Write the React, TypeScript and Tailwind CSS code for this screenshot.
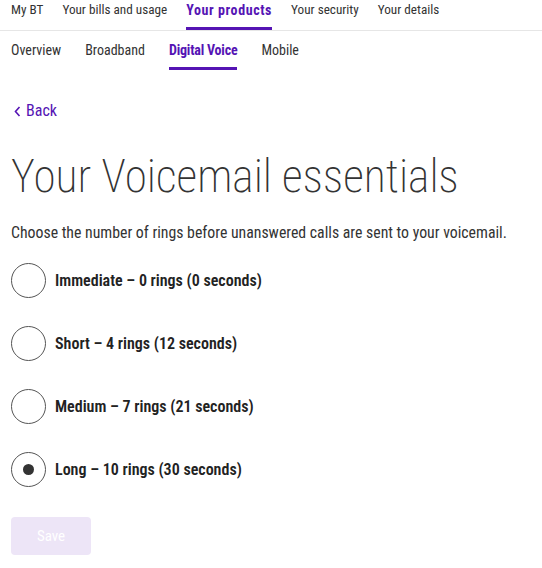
import { useState } from 'react';

const topNav = ['My BT', 'Your bills and usage', 'Your products', 'Your security', 'Your details'];
const subNav = ['Overview', 'Broadband', 'Digital Voice', 'Mobile'];

const options = [
  'Immediate – 0 rings (0 seconds)',
  'Short – 4 rings (12 seconds)',
  'Medium – 7 rings (21 seconds)',
  'Long – 10 rings (30 seconds)',
];

export default function App() {
  const [selected, setSelected] = useState(3);

  return (
    <div className="min-h-[568px] bg-white text-[#333] font-['Roboto_Condensed',sans-serif]">
      {/* main navigation */}
      <nav className="flex gap-[19px] border-b border-[#e6e6e6] px-[11px]">
        {topNav.map((item) => (
          <a
            key={item}
            className={
              item === 'Your products'
                ? 'border-b-[3px] border-[#5514b4] pb-[7px] text-[14px] tracking-[0.6px] leading-[20px] font-bold text-[#5514b4]'
                : 'border-b-[3px] border-transparent pb-[7px] text-[13.2px] leading-[20px] text-[#333]'
            }
          >
            {item}
          </a>
        ))}
      </nav>

      {/* product tabs */}
      <div className="flex gap-[24px] px-[11px] pt-[9px]">
        {subNav.map((item) => (
          <a
            key={item}
            className={
              item === 'Digital Voice'
                ? 'border-b-[3px] border-[#5514b4] pb-[7px] text-[14px] tracking-[-0.2px] leading-[20px] font-bold text-[#5514b4]'
                : 'border-b-[3px] border-transparent pb-[7px] text-[14px] leading-[20px] text-[#333]'
            }
          >
            {item}
          </a>
        ))}
      </div>

      <div className="px-[11px]">
        <a className="mt-[31px] flex items-center gap-[5px] pl-[3px] text-[16px] leading-[20px] text-[#5514b4]">
          <svg width="7" height="11" viewBox="0 0 7 11" fill="none">
            <path d="M5.5 1L1.5 5.5L5.5 10" stroke="#5514b4" strokeWidth="1.6" />
          </svg>
          Back
        </a>

        <h1 className="mt-[26px] text-[45.5px] leading-[60px] font-extralight text-[#333] whitespace-nowrap">
          Your Voicemail essentials
        </h1>

        <p className="mt-[16px] text-[15.8px] leading-[20px] whitespace-nowrap">
          Choose the number of rings before unanswered calls are sent to your voicemail.
        </p>

        <div className="mt-[20px] flex flex-col gap-[28px]">
          {options.map((label, i) => (
            <label key={label} className="flex items-center gap-[9px] cursor-pointer">
              <button
                type="button"
                onClick={() => setSelected(i)}
                className="flex h-[35px] w-[35px] shrink-0 items-center justify-center rounded-full border border-[#555] bg-white"
              >
                {selected === i && <span className="h-[11px] w-[11px] rounded-full bg-[#333]" />}
              </button>
              <span className="text-[16px] font-semibold leading-[20px] text-[#222]">{label}</span>
            </label>
          ))}
        </div>

        <button
          type="button"
          disabled
          className="mt-[30px] h-[38px] w-[80px] rounded-[4px] bg-[#ede5f7] text-[15px] text-white"
        >
          Save
        </button>
      </div>
    </div>
  );
}
